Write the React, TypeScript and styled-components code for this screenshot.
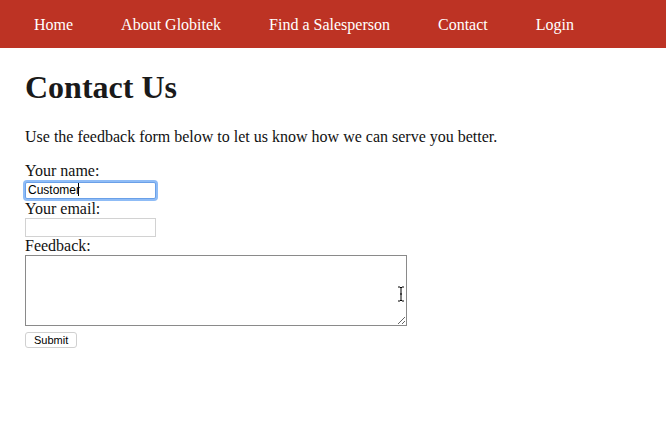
import React from "react";
import styled, { createGlobalStyle } from "styled-components";

const Global = createGlobalStyle`
  html, body { margin: 0; padding: 0; background: #fff; }
  body { font-family: "Liberation Serif", "Times New Roman", serif; font-size: 16px; color: #111; }
`;

const NavBar = styled.nav`
  background: #bd3324;
  height: 48px;
  box-sizing: border-box;
  display: flex;
  align-items: center;
  padding-left: 34px;
  padding-top: 2px;
  gap: 48px;
`;

const NavLink = styled.a`
  color: #fff;
  text-decoration: none;
  font-size: 16px;
  font-family: "Liberation Serif", serif;
`;

const Main = styled.main`
  padding: 0 25px;
`;

const Title = styled.h1`
  font-size: 32px;
  font-weight: bold;
  margin: 21px 0 22px;
  color: #1a1a1a;
`;

const Intro = styled.p`
  margin: 0 0 16px;
`;

const Form = styled.form`
  display: flex;
  flex-direction: column;
  align-items: flex-start;
`;

const Label = styled.label`
  line-height: 18px;
  display: block;
`;

const TextInput = styled.input<{ $focused?: boolean }>`
  box-sizing: border-box;
  width: 131px;
  height: ${(p) => (p.$focused ? "17px" : "19px")};
  margin: ${(p) => (p.$focused ? "1px 0" : "0")};
  border: 1px solid ${(p) => (p.$focused ? "#6aa0e8" : "#d2d2d2")};
  box-shadow: ${(p) => (p.$focused ? "0 0 0 2px #8fbcf6" : "none")};
  border-radius: ${(p) => (p.$focused ? "2px" : "0")};
  padding: 0 2px;
  font-family: "Liberation Sans", Arial, sans-serif;
  font-size: 12px;
  color: #000;
  outline: none;
  background: #fff;
`;

const CaretWrap = styled.div`
  position: relative;
`;

const Caret = styled.span`
  position: absolute;
  left: 53px;
  top: 3px;
  width: 1px;
  height: 13px;
  background: #000;
`;

const TextAreaWrap = styled.div`
  position: relative;
`;

const TextArea = styled.textarea`
  box-sizing: border-box;
  width: 382px;
  height: 71px;
  border: 1px solid #8a8a8a;
  display: block;
  resize: both;
  margin: 0;
`;

const Cursor = styled.svg`
  position: absolute;
  left: 372px;
  top: 31px;
`;

const SubmitButton = styled.button`
  margin-top: 6px;
  height: 16px;
  padding: 0 8px;
  font-family: "Liberation Sans", Arial, sans-serif;
  font-size: 11px;
  background: #fff;
  border: 1px solid #d0d0d0;
  border-radius: 3px;
  color: #000;
  line-height: 14px;
`;

export default function App() {
  const links = ["Home", "About Globitek", "Find a Salesperson", "Contact", "Login"];
  return (
    <>
      <Global />
      <NavBar>
        {links.map((l) => (
          <NavLink key={l} href="#">{l}</NavLink>
        ))}
      </NavBar>
      <Main>
        <Title>Contact Us</Title>
        <Intro>Use the feedback form below to let us know how we can serve you better.</Intro>
        <Form onSubmit={(e) => e.preventDefault()}>
          <Label>Your name:</Label>
          <CaretWrap>
            <TextInput $focused defaultValue="Customer" />
            <Caret />
          </CaretWrap>
          <Label>Your email:</Label>
          <TextInput />
          <Label>Feedback:</Label>
          <TextAreaWrap>
            <TextArea />
            <Cursor width="8" height="16" viewBox="0 0 8 16">
              <path d="M1 1h2l1 1 1-1h2M4 2v12M1 15h2l1-1 1 1h2M3 8h2" stroke="#000" strokeWidth="1" fill="none" />
            </Cursor>
          </TextAreaWrap>
          <SubmitButton type="submit">Submit</SubmitButton>
        </Form>
      </Main>
    </>
  );
}
